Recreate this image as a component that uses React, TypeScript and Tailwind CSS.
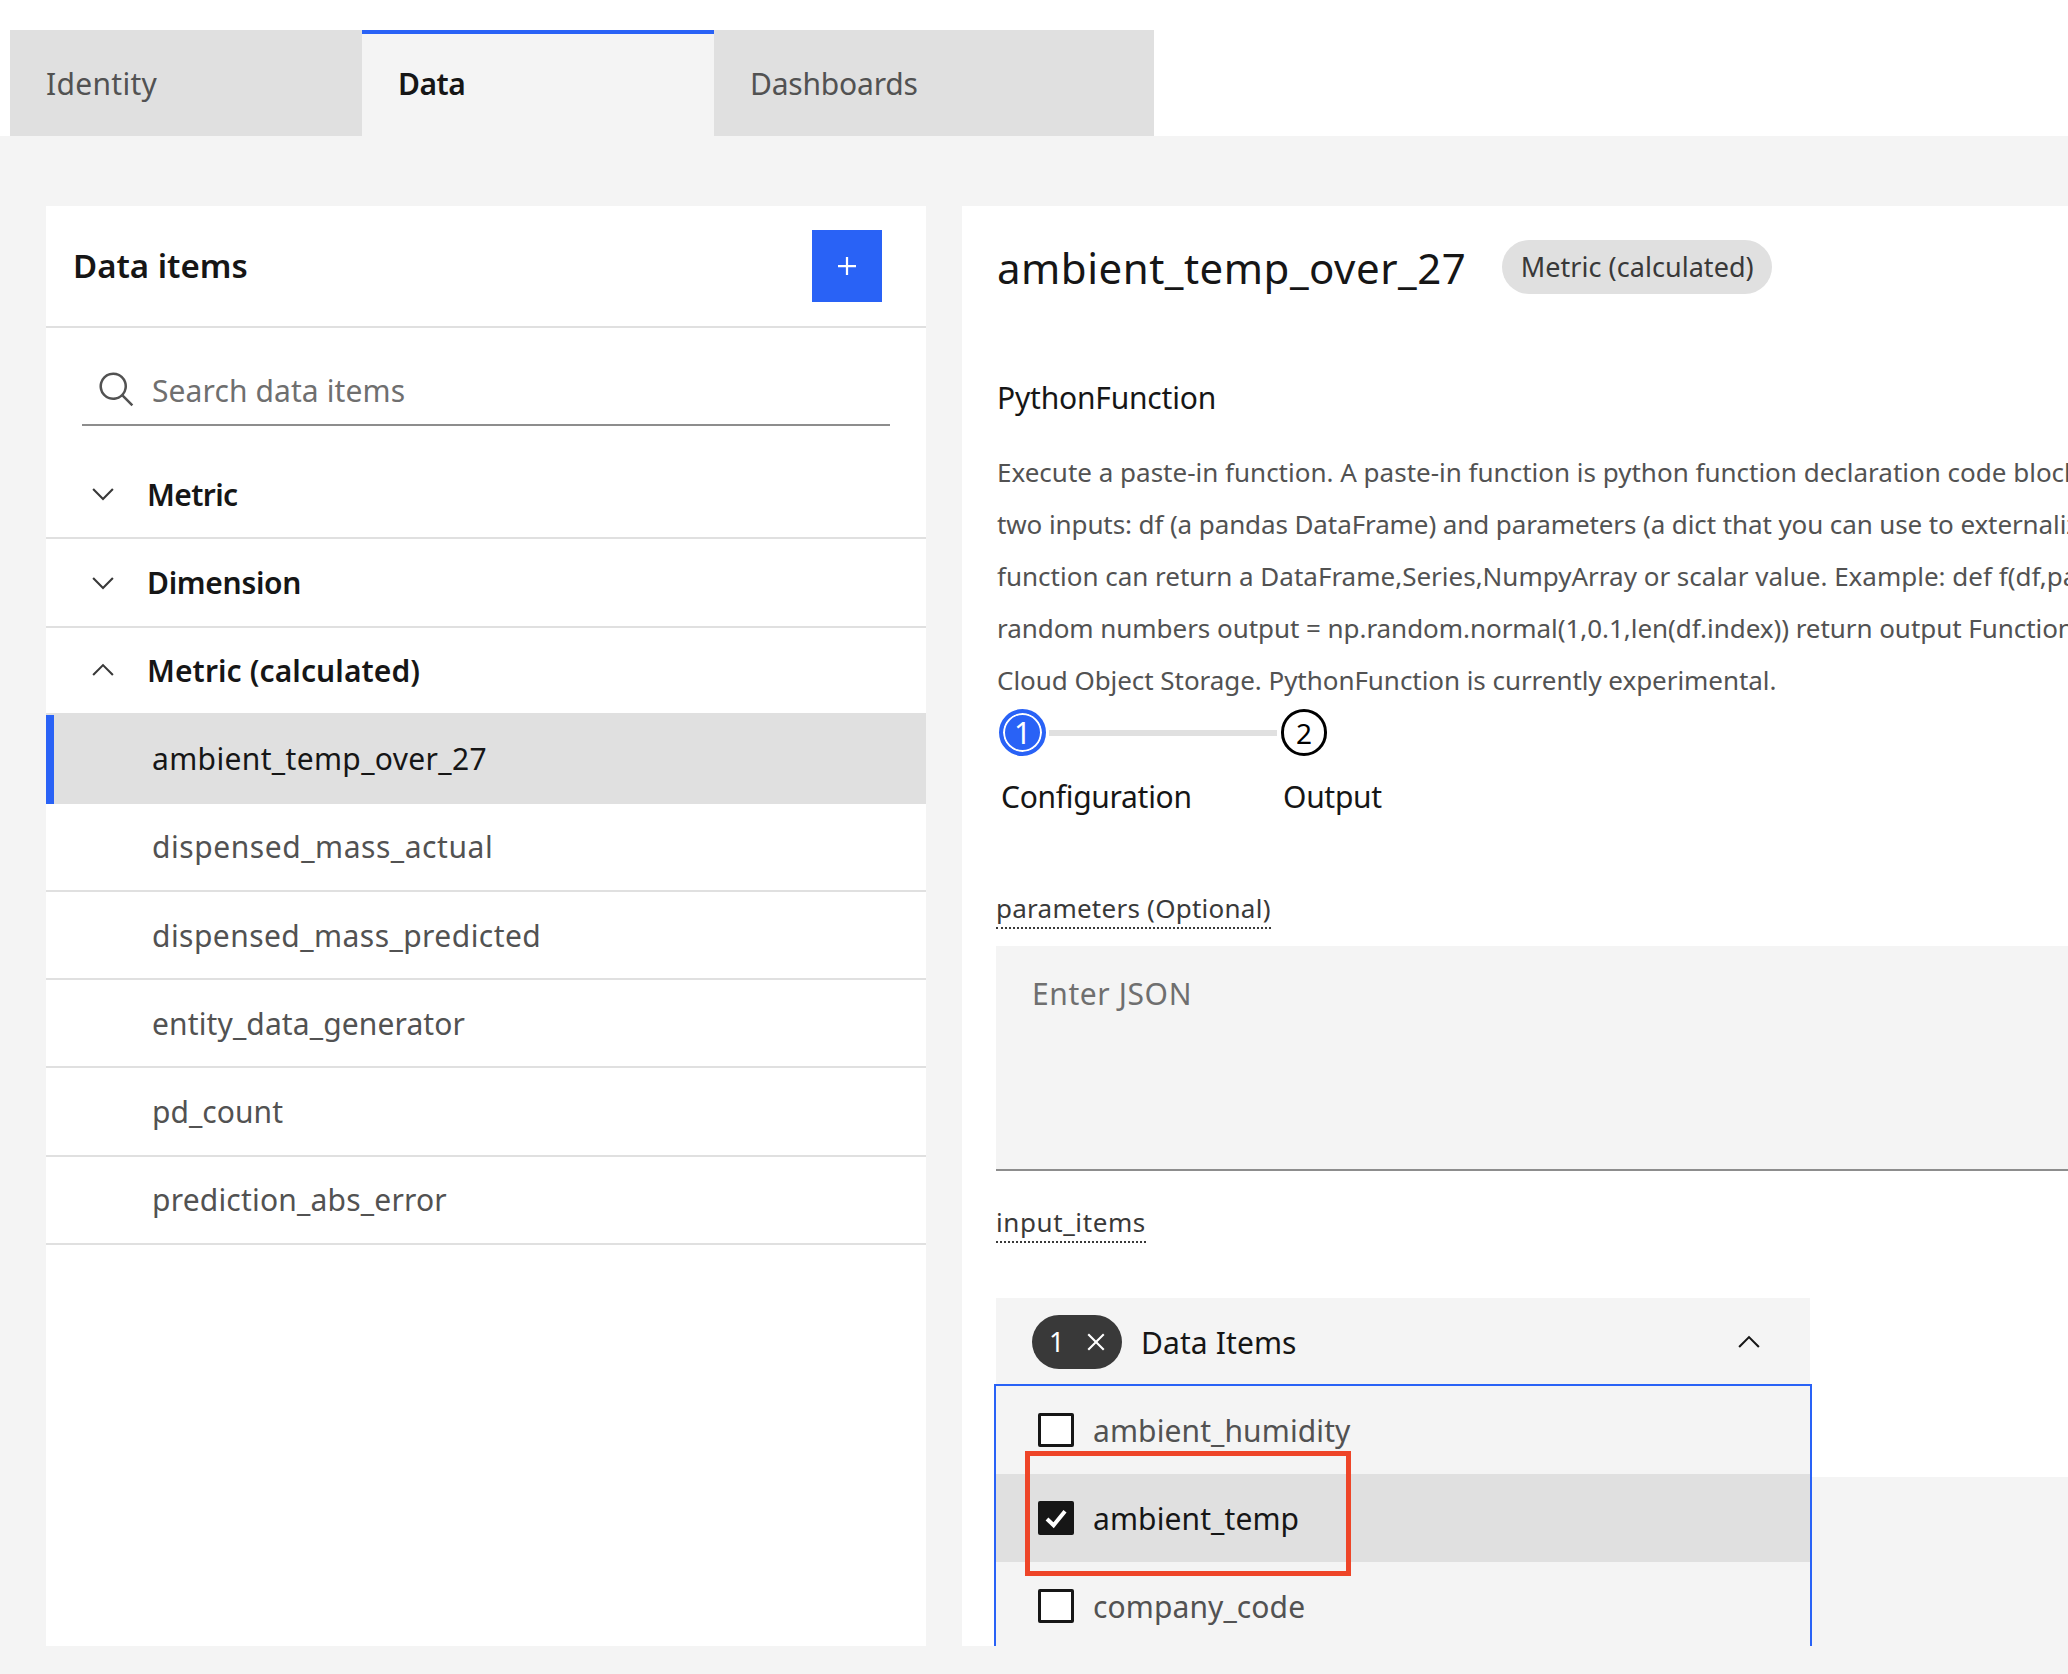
const FONT = "font-['Noto_Sans',sans-serif]";

function Chevron({ up = false, className = '' }: { up?: boolean; className?: string }) {
  return (
    <svg viewBox="0 0 32 32" className={`${className} ${up ? 'rotate-180' : ''}`} fill="currentColor">
      <path d="M16 22L6 12l1.4-1.4L16 19.2l8.6-8.6L26 12z" />
    </svg>
  );
}

function CloseIcon({ className = '' }: { className?: string }) {
  return (
    <svg viewBox="0 0 32 32" className={className} fill="currentColor">
      <path d="M24 9.4L22.6 8 16 14.6 9.4 8 8 9.4 14.6 16 8 22.6 9.4 24 16 17.4 22.6 24 24 22.6 17.4 16 24 9.4z" />
    </svg>
  );
}

function Group({ label, up = false, tracking }: { label: string; up?: boolean; tracking: string }) {
  return (
    <div className={`flex items-center pl-[40px] ${up ? 'h-[85px]' : 'h-[88.4px] border-b-2 border-[#e0e0e0]'}`}>
      <Chevron up={up} className="w-[34px] h-[34px] text-[#393939]" />
      <span className={`ml-[27px] text-[30px] font-semibold text-[#161616] ${tracking}`}>{label}</span>
    </div>
  );
}

function Item({ label, tracking, selected = false }: { label: string; tracking: string; selected?: boolean }) {
  return (
    <div
      className={`flex items-center pl-[106px] text-[30px] ${tracking} ${
        selected
          ? 'h-[91px] bg-[#e0e0e0] text-[#161616] relative'
          : 'h-[88.2px] border-b-2 border-[#e0e0e0] text-[#525252]'
      }`}
    >
      {selected && <div className="absolute left-0 top-[2px] bottom-0 w-[8px] bg-[#2962f6]" />}
      {label}
    </div>
  );
}

function DropdownOption({ label, checked = false }: { label: string; checked?: boolean }) {
  return (
    <div
      className={`flex items-center h-[88px] pl-[42px] text-[30px] tracking-[0.1px] ${
        checked ? 'bg-[#e0e0e0] text-[#161616]' : 'text-[#525252]'
      }`}
    >
      {checked ? (
        <div className="w-[36px] h-[34px] rounded-[2px] bg-[#161616] flex items-center justify-center">
          <svg viewBox="0 0 16 16" className="w-[32px] h-[32px]" fill="none" stroke="white" strokeWidth="2">
            <path d="M3.5 8.5 L6.8 11.6 L12.5 4.6" />
          </svg>
        </div>
      ) : (
        <div className="w-[36px] h-[34px] rounded-[2px] border-[3px] border-[#161616] bg-white" />
      )}
      <span className="ml-[19px]">{label}</span>
    </div>
  );
}

const description = [
  { text: 'Execute a paste-in function. A paste-in function is python function declaration code block. The', tracking: 'tracking-[0px]' },
  { text: 'two inputs: df (a pandas DataFrame) and parameters (a dict that you can use to externalize the', tracking: 'tracking-[-0.1px]' },
  { text: 'function can return a DataFrame,Series,NumpyArray or scalar value. Example: def f(df,parameters):', tracking: 'tracking-[0px]' },
  { text: 'random numbers output = np.random.normal(1,0.1,len(df.index)) return output Function source', tracking: 'tracking-[-0.05px]' },
  { text: 'Cloud Object Storage. PythonFunction is currently experimental.', tracking: 'tracking-[-0.05px]' },
];

export default function App() {
  return (
    <div className={`${FONT} w-[2068px] h-[1674px] bg-white overflow-hidden flex flex-col`}>
      {/* Tabs */}
      <div className="flex pt-[30px] pl-[10px] h-[136px] shrink-0">
        <div className="w-[352px] bg-[#e0e0e0] flex items-center pl-[36px] text-[30px] tracking-[0.3px] text-[#525252]">
          Identity
        </div>
        <div className="w-[352px] bg-[#f4f4f4] border-t-[4px] border-[#2962f6] flex items-center pl-[36px] pb-[4px] text-[30px] font-semibold tracking-[-0.5px] text-[#161616]">
          Data
        </div>
        <div className="w-[440px] bg-[#e0e0e0] flex items-center pl-[36px] text-[30px] tracking-[-0.2px] text-[#525252]">
          Dashboards
        </div>
      </div>

      {/* Body */}
      <div className="flex-1 bg-[#f4f4f4] flex gap-[36px] pl-[46px] pt-[70px] pb-[28px] min-h-0">
        {/* Data items */}
        <div className="w-[880px] shrink-0 bg-white">
          <div className="h-[122px] border-b-2 border-[#e0e0e0] flex items-center justify-between pl-[27px] pr-[44px]">
            <span className="text-[33px] font-semibold tracking-[0px] text-[#161616]">Data items</span>
            <button className="w-[70px] h-[72px] bg-[#2962f6] text-white flex items-center justify-center -mt-[1px]">
              <svg viewBox="0 0 32 32" className="w-[36px] h-[36px]" fill="currentColor">
                <path d="M17 15L17 8 15 8 15 15 8 15 8 17 15 17 15 24 17 24 17 17 24 17 24 15z" />
              </svg>
            </button>
          </div>
          <div className="mx-[36px] h-[98px] border-b-2 border-[#8d8d8d] flex items-center pl-[15px] pt-[28px]">
            <svg viewBox="0 0 32 32" className="w-[40px] h-[40px] text-[#525252]" fill="currentColor">
              <path d="M29 27.5859l-7.5521-7.5521a11.0177 11.0177 0 1 0-1.4141 1.4141L27.5859 29ZM4 13a9 9 0 1 1 9 9A9.01 9.01 0 0 1 4 13Z" />
            </svg>
            <span className="ml-[15px] text-[30px] tracking-[0.1px] text-[#6f6f6f]">Search data items</span>
          </div>
          <div className="mt-[25px]">
            <Group label="Metric" tracking="tracking-[-0.6px]" />
            <Group label="Dimension" tracking="tracking-[-0.3px]" />
            <Group label="Metric (calculated)" tracking="tracking-[0.1px]" up />
            <Item label="ambient_temp_over_27" tracking="tracking-[0.35px]" selected />
            <Item label="dispensed_mass_actual" tracking="tracking-[0.55px]" />
            <Item label="dispensed_mass_predicted" tracking="tracking-[0.45px]" />
            <Item label="entity_data_generator" tracking="tracking-[0.12px]" />
            <Item label="pd_count" tracking="tracking-[0.05px]" />
            <Item label="prediction_abs_error" tracking="tracking-[0.2px]" />
          </div>
        </div>

        {/* Detail */}
        <div className="flex-1 min-w-0 bg-white overflow-hidden relative flex flex-col">
          <div className="flex items-center pl-[35px] pt-[34px] h-[88px] shrink-0">
            <h1 className="text-[42px] tracking-[0.5px] text-[#161616] whitespace-nowrap mt-[1px]">ambient_temp_over_27</h1>
            <span className="ml-[36px] h-[54px] w-[270px] rounded-full bg-[#e0e0e0] flex items-center justify-center text-[27px] tracking-[0.05px] text-[#393939] whitespace-nowrap">
              Metric (calculated)
            </span>
          </div>
          <div className="pl-[35px] mt-[82px] text-[30px] leading-[44px] tracking-[-0.2px] text-[#161616]">PythonFunction</div>
          <div className="pl-[35px] mt-[26px] text-[26px] leading-[52px] text-[#525252] whitespace-nowrap">
            {description.map((line) => (
              <div key={line.text} className={line.tracking}>{line.text}</div>
            ))}
          </div>
          {/* Stepper */}
          <div className="pl-[37px] mt-[3px] flex items-center">
            <div className="w-[47px] h-[47px] rounded-full bg-[#2962f6] border-[4px] border-[#2962f6] ring-[2px] ring-inset ring-white flex items-center justify-center text-[30px] text-white">
              1
            </div>
            <div className="w-[228px] h-[6px] ml-[3px] mr-[4px] bg-[#e0e0e0]" />
            <div className="w-[46px] h-[47px] rounded-full border-[3px] border-black flex items-center justify-center text-[28px] text-black">
              2
            </div>
          </div>
          <div className="pl-[39px] mt-[19px] flex text-[30px] leading-[44px] tracking-[-0.3px] text-[#161616]">
            <span className="w-[282px]">Configuration</span>
            <span>Output</span>
          </div>
          <div className="pl-[34px] mt-[72px] flex">
            <span className="text-[26px] leading-[34px] tracking-[0.25px] text-[#393939] border-b-2 border-dotted border-[#393939] pb-[2px]">
              parameters (Optional)
            </span>
          </div>
          <div className="ml-[34px] mt-[17px] h-[225px] shrink-0 bg-[#f4f4f4] border-b-2 border-[#8d8d8d] pl-[36px] pt-[26px] text-[30px] leading-[44px] tracking-[0.6px] text-[#6f6f6f]">
            Enter JSON
          </div>
          <div className="pl-[34px] mt-[34px] flex">
            <span className="text-[26px] leading-[34px] tracking-[0.6px] text-[#393939] border-b-2 border-dotted border-[#393939] pb-[2px]">
              input_items
            </span>
          </div>
          <div className="ml-[34px] mt-[234px] flex-1 bg-[#f4f4f4]" />

          {/* Multi select, open over the page */}
          <div className="absolute left-[32px] top-[1092px] w-[818px] h-[348px]">
            <div className="mx-[2px] h-[86px] bg-[#f4f4f4] flex items-center pl-[36px] pr-[44px] pt-[2px]">
              <div className="w-[90px] h-[54px] rounded-full bg-[#393939] text-white flex items-center pl-[17px] text-[27px]">
                1
                <CloseIcon className="ml-[15px] w-[34px] h-[34px]" />
              </div>
              <span className="ml-[19px] text-[30px] tracking-[0.1px] text-[#161616]">Data Items</span>
              <Chevron up className="ml-auto w-[34px] h-[34px] text-[#161616]" />
            </div>
            <div className="h-[262px] border-x-2 border-t-2 border-[#2962f6] bg-[#f4f4f4]">
              <DropdownOption label="ambient_humidity" />
              <DropdownOption label="ambient_temp" checked />
              <DropdownOption label="company_code" />
            </div>
          </div>

          {/* Red annotation box */}
          <div className="absolute left-[63px] top-[1245px] w-[326px] h-[125px] border-[5px] border-[#ee4528]" />
        </div>
      </div>
    </div>
  );
}
